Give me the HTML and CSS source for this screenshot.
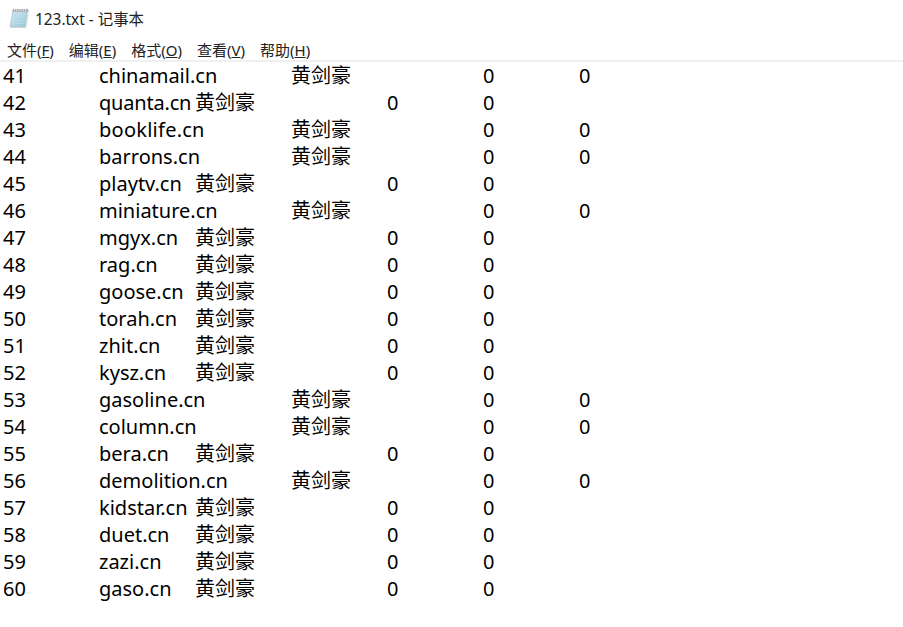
FILE: index.html
```html
<!DOCTYPE html>
<html lang="zh">
<head>
<meta charset="utf-8">
<title>123.txt - 记事本</title>
<link rel="stylesheet" href="styles.css">
</head>
<body>
<div class="titlebar">
<svg class="app-icon" width="20" height="20" viewBox="0 0 20 20">
<defs><linearGradient id="pad" x1="0" y1="0" x2="1" y2="1"><stop offset="0" stop-color="#d4eaf2"/><stop offset="1" stop-color="#93c6d8"/></linearGradient></defs>
<path d="M4.5 2H19.5L17 19.5H2Z" fill="#eef3f5" stroke="#aab5ba" stroke-width=".5"/>
<path d="M4 2H18.5L16 18.5H1Z" fill="url(#pad)" stroke="#9fb4bd" stroke-width=".5"/>
<path d="M3.5 6.5H17.5M3 9.5H17M2.6 12.5H16.6M2.2 15.5H16.2" stroke="#bcdbe6" stroke-width=".7"/>
<path d="M4 1H19L18.5 4H3.5Z" fill="#a3a9ad"/>
<path d="M5.5 .5v3M7.7 .5v3M9.9 .5v3M12.1 .5v3M14.3 .5v3M16.5 .5v3" stroke="#f2f2f2" stroke-width=".8"/>
</svg>
<span class="title">123.txt - 记事本</span>
</div>
<nav class="menubar">
<span class="menu">文件(<u>F</u>)</span>
<span class="menu">编辑(<u>E</u>)</span>
<span class="menu">格式(<u>O</u>)</span>
<span class="menu">查看(<u>V</u>)</span>
<span class="menu">帮助(<u>H</u>)</span>
</nav>
<pre class="editor">41	chinamail.cn	黄剑豪		0	0
42	<span class="tight">quanta.cn</span>	黄剑豪		0	0
43	<span class="wide">booklife.cn</span>	黄剑豪		0	0
44	barrons.cn	黄剑豪		0	0
45	playtv.cn	黄剑豪		0	0
46	miniature.cn	黄剑豪		0	0
47	mgyx.cn	黄剑豪		0	0
48	rag.cn	黄剑豪		0	0
49	goose.cn	黄剑豪		0	0
50	torah.cn	黄剑豪		0	0
51	zhit.cn	黄剑豪		0	0
52	kysz.cn	黄剑豪		0	0
53	gasoline.cn	黄剑豪		0	0
54	column.cn	黄剑豪		0	0
55	bera.cn	黄剑豪		0	0
56	demolition.cn	黄剑豪		0	0
57	kidstar.cn	黄剑豪		0	0
58	duet.cn	黄剑豪		0	0
59	zazi.cn	黄剑豪		0	0
60	gaso.cn	黄剑豪		0	0</pre>
</body>
</html>
```
FILE: styles.css
```css
html, body {
  margin: 0;
  padding: 0;
  background: #fff;
  overflow: hidden;
}
body {
  width: 903px;
  height: 627px;
  font-family: "Noto Sans", "Noto Sans CJK SC", sans-serif;
  color: #000;
}
.titlebar {
  height: 38px;
  display: flex;
  align-items: center;
  gap: 6px;
  padding: 0 0 2px 9px;
  box-sizing: border-box;
}
.app-icon {
  flex: none;
}
.title {
  font-size: 15.4px;
  color: #222;
}
.menubar {
  height: 22px;
  display: flex;
  gap: 15px;
  padding-left: 7px;
  align-items: center;
  font-size: 15px;
  color: #222;
  border-bottom: 2px solid #f0f0f0;
}
.menu {
  white-space: nowrap;
}
.editor {
  margin: 0;
  padding: 0 0 0 3px;
  font-family: "Noto Sans", "Noto Sans CJK SC", sans-serif;
  font-size: 20px;
  line-height: 27px;
  tab-size: 96px;
  white-space: pre;
}
.tight {
  letter-spacing: -0.2px;
}
.wide {
  letter-spacing: 0.25px;
}
```
